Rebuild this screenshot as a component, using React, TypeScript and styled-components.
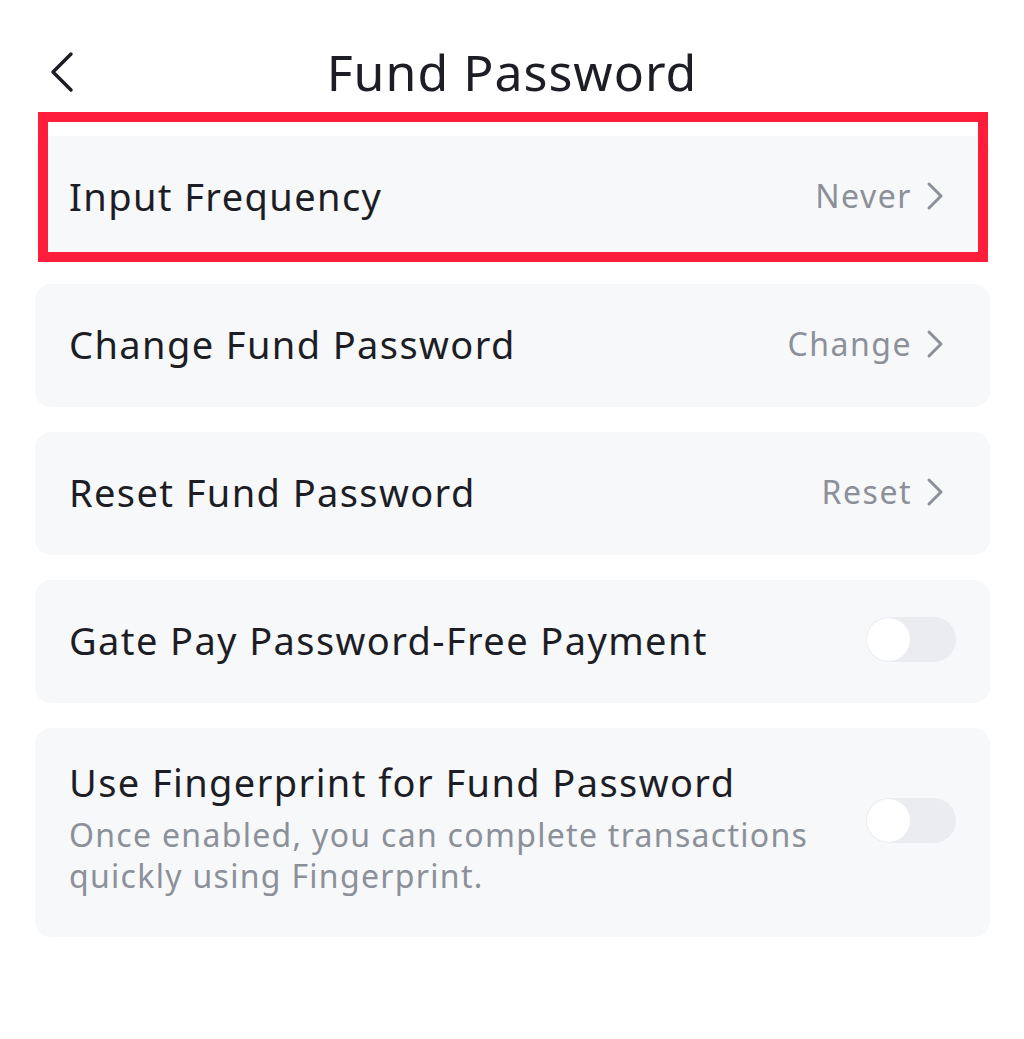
import React from "react";
import styled, { createGlobalStyle } from "styled-components";

const Global = createGlobalStyle`
  html, body { margin: 0; padding: 0; background: #ffffff; }
  body { font-family: "Noto Sans", "Open Sans", sans-serif; color: #1d1e25; }
`;

const Page = styled.div`
  width: 1024px;
  min-height: 1039px;
  background: #ffffff;
`;

const Header = styled.header`
  position: relative;
  height: 136px;
  display: flex;
  align-items: flex-start;
  justify-content: center;
  box-sizing: border-box;
  padding-top: 40px;
`;

const BackButton = styled.button`
  position: absolute;
  left: 48px;
  top: 50px;
  width: 28px;
  height: 44px;
  padding: 0;
  border: none;
  background: transparent;
  display: flex;
  align-items: center;
  justify-content: center;
`;

const Title = styled.h1`
  margin: 0;
  font-size: 50px;
  font-weight: 400;
  line-height: 64px;
  color: #1d1e25;
  letter-spacing: 1px;
`;

const List = styled.div`
  display: flex;
  flex-direction: column;
  gap: 25px;
  padding: 0 34px 0 35px;
`;

const Card = styled.div<{ $tall?: boolean }>`
  position: relative;
  background: #f7f8fa;
  border-radius: 16px;
  min-height: ${(p) => (p.$tall ? "209px" : "123px")};
  box-sizing: border-box;
  padding: ${(p) => (p.$tall ? "29px 46px 40px 34px" : "0 46px 4px 34px")};
  display: flex;
  align-items: ${(p) => (p.$tall ? "flex-start" : "center")};
  justify-content: space-between;
  gap: 40px;
`;

const Highlight = styled.div`
  position: absolute;
  top: -24px;
  left: 3px;
  right: 2px;
  bottom: -3px;
  border: 10px solid #ff1d3c;
  pointer-events: none;
`;

const TextBlock = styled.div`
  display: flex;
  flex-direction: column;
  gap: 7px;
`;

const Label = styled.div`
  font-size: 38px;
  line-height: 50px;
  color: #1d1e25;
  letter-spacing: 1.4px;
`;

const Description = styled.div`
  font-size: 32px;
  line-height: 41px;
  color: #8b9099;
  letter-spacing: 1.3px;
`;

const Action = styled.div`
  display: flex;
  align-items: center;
  gap: 14px;
  font-size: 32px;
  color: #8b9099;
  letter-spacing: 1.5px;
`;

const Toggle = styled.div<{ $offset?: number }>`
  flex: none;
  width: 90px;
  height: 45px;
  border-radius: 23px;
  background: #ebecf0;
  position: relative;
  margin-right: -12px;
  margin-top: ${(p) => p.$offset ?? 0}px;
`;

const Knob = styled.div`
  position: absolute;
  left: 1px;
  top: 1px;
  width: 43px;
  height: 43px;
  border-radius: 50%;
  background: #ffffff;
`;

const ChevronRight = () => (
  <svg width="18" height="30" viewBox="0 0 18 30" fill="none">
    <path d="M3 3 L15 15 L3 27" stroke="#8b9099" strokeWidth="3" strokeLinecap="round" strokeLinejoin="round" />
  </svg>
);

const ChevronLeft = () => (
  <svg width="26" height="42" viewBox="0 0 26 42" fill="none">
    <path d="M22 3 L4 21 L22 39" stroke="#1d1e25" strokeWidth="3.5" strokeLinecap="round" strokeLinejoin="round" />
  </svg>
);

const NavRow = ({ label, value, highlight }: { label: string; value: string; highlight?: boolean }) => (
  <Card>
    {highlight && <Highlight />}
    <Label>{label}</Label>
    <Action>
      <span>{value}</span>
      <ChevronRight />
    </Action>
  </Card>
);

export default function App() {
  return (
    <Page>
      <Global />
      <Header>
        <BackButton aria-label="Back">
          <ChevronLeft />
        </BackButton>
        <Title>Fund Password</Title>
      </Header>
      <List>
        <NavRow label="Input Frequency" value="Never" highlight />
        <NavRow label="Change Fund Password" value="Change" />
        <NavRow label="Reset Fund Password" value="Reset" />
        <Card>
          <Label>Gate Pay Password-Free Payment</Label>
          <Toggle>
            <Knob />
          </Toggle>
        </Card>
        <Card $tall>
          <TextBlock>
            <Label>Use Fingerprint for Fund Password</Label>
            <Description>
              Once enabled, you can complete transactions
              <br />
              quickly using Fingerprint.
            </Description>
          </TextBlock>
          <Toggle $offset={41}>
            <Knob />
          </Toggle>
        </Card>
      </List>
    </Page>
  );
}
